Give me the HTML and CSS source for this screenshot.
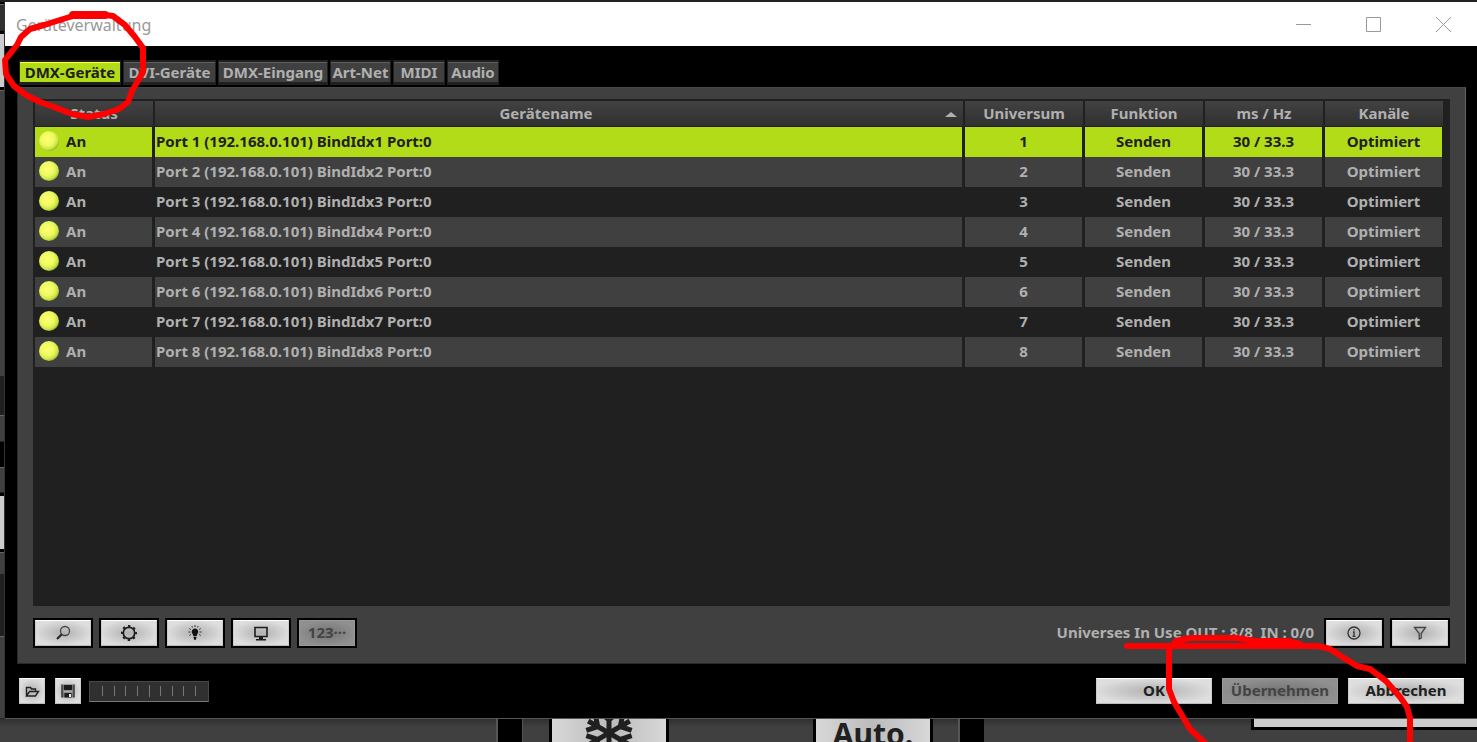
FILE: index.html
```html
<!DOCTYPE html>
<html lang="de">
<head>
<meta charset="utf-8">
<title>Geräteverwaltung</title>
<link rel="stylesheet" href="styles.css">
</head>
<body>
<div class="desktop">
  <div class="top-edge"></div>
  <div class="middle">
    <div class="left-edge">
      <i class="slab gap h2"></i><i class="slab grey dim h28"></i><i class="slab gap h4"></i><i class="slab light h52"></i><i class="slab gap h4"></i>
      <i class="slab grey grow"></i><i class="slab dark h38"></i><i class="slab grey h28"></i><i class="slab gap h24"></i>
      <i class="slab grey h26"></i><i class="slab gap h4"></i><i class="slab light h52"></i><i class="slab gap h4"></i>
      <i class="slab grey h23"></i><i class="slab dark h60"></i><i class="slab grey h82"></i>
    </div>
    <main class="window">
      <header class="titlebar">
        <h1 class="title">Geräteverwaltung</h1>
        <div class="window-controls">
          <button class="wc" aria-label="Minimieren"><svg width="17" height="17" viewBox="0 0 17 17"><path d="M1 8.500h15"/></svg></button>
          <button class="wc" aria-label="Maximieren"><svg width="17" height="17" viewBox="0 0 17 17"><path d="M1.500 1.500h14v14h-14z"/></svg></button>
          <button class="wc" aria-label="Schließen"><svg width="17" height="17" viewBox="0 0 17 17"><path d="M1 1l15 15M16 1L1 16"/></svg></button>
        </div>
      </header>
      <div class="content">
        <nav class="tabs" role="tablist">
          <button class="tab w102 active" role="tab" aria-selected="true">DMX-Geräte</button>
          <button class="tab w93" role="tab">DVI-Geräte</button>
          <button class="tab w110" role="tab">DMX-Eingang</button>
          <button class="tab w61" role="tab">Art-Net</button>
          <button class="tab w52" role="tab">MIDI</button>
          <button class="tab w52" role="tab">Audio</button>
        </nav>
        <section class="panel">
          <div class="list">
            <table class="devices">
              <colgroup><col class="c-fix"><col><col class="c-fix"><col class="c-fix"><col class="c-fix"><col class="c-fix"></colgroup>
              <thead><tr><th>Status</th><th class="name-head">Gerätename<span class="sort"></span></th><th>Universum</th><th>Funktion</th><th>ms / Hz</th><th>Kanäle</th></tr></thead>
              <tbody>
                <tr class="selected"><td class="st"><span class="led"></span>An</td><td class="nm">Port 1 (192.168.0.101) BindIdx1 Port:0</td><td>1</td><td>Senden</td><td>30 / 33.3</td><td>Optimiert</td></tr>
                <tr><td class="st"><span class="led"></span>An</td><td class="nm">Port 2 (192.168.0.101) BindIdx2 Port:0</td><td>2</td><td>Senden</td><td>30 / 33.3</td><td>Optimiert</td></tr>
                <tr><td class="st"><span class="led"></span>An</td><td class="nm">Port 3 (192.168.0.101) BindIdx3 Port:0</td><td>3</td><td>Senden</td><td>30 / 33.3</td><td>Optimiert</td></tr>
                <tr><td class="st"><span class="led"></span>An</td><td class="nm">Port 4 (192.168.0.101) BindIdx4 Port:0</td><td>4</td><td>Senden</td><td>30 / 33.3</td><td>Optimiert</td></tr>
                <tr><td class="st"><span class="led"></span>An</td><td class="nm">Port 5 (192.168.0.101) BindIdx5 Port:0</td><td>5</td><td>Senden</td><td>30 / 33.3</td><td>Optimiert</td></tr>
                <tr><td class="st"><span class="led"></span>An</td><td class="nm">Port 6 (192.168.0.101) BindIdx6 Port:0</td><td>6</td><td>Senden</td><td>30 / 33.3</td><td>Optimiert</td></tr>
                <tr><td class="st"><span class="led"></span>An</td><td class="nm">Port 7 (192.168.0.101) BindIdx7 Port:0</td><td>7</td><td>Senden</td><td>30 / 33.3</td><td>Optimiert</td></tr>
                <tr><td class="st"><span class="led"></span>An</td><td class="nm">Port 8 (192.168.0.101) BindIdx8 Port:0</td><td>8</td><td>Senden</td><td>30 / 33.3</td><td>Optimiert</td></tr>
              </tbody>
            </table>
          </div>
          <div class="toolbar">
            <button class="btn tool" aria-label="Suchen"><svg width="20" height="20" viewBox="0 0 20 20"><circle cx="12" cy="8" r="4.500" fill="none" stroke="#444" stroke-width="1.300"/><path d="M8.800 11.200L4 16" stroke="#222" stroke-width="2"/></svg></button>
            <button class="btn tool" aria-label="Einstellungen"><svg width="20" height="20" viewBox="0 0 20 20"><circle cx="10" cy="10" r="5.700" fill="none" stroke="#1c1c1c" stroke-width="1.700"/><circle cx="10" cy="10" r="7" fill="none" stroke="#1c1c1c" stroke-width="2" stroke-dasharray="2.300 3.198" stroke-dashoffset="1.150"/></svg></button>
            <button class="btn tool" aria-label="Identifizieren"><svg width="20" height="20" viewBox="0 0 20 20"><path d="M10 5.500a3.200 3.200 0 0 0-2.700 5c.7 1 .9 1.500.9 2.500h3.600c0-1 .2-1.500.9-2.500a3.200 3.200 0 0 0-2.700-5z" fill="#111"/><path d="M8.500 14.500h3M9 16h2" stroke="#111" stroke-width="1.300"/><path d="M10 2v2M6.800 3l.8 1.500M13.200 3l-.8 1.500M4.300 5.500l1.500 1M15.700 5.500l-1.500 1M3.500 9h2M16.500 9h-2M4.300 12.500l1.500-1M15.700 12.500l-1.500-1" stroke="#333" stroke-width="1"/></svg></button>
            <button class="btn tool" aria-label="Anzeige"><svg width="20" height="20" viewBox="0 0 20 20"><path d="M4 4.500h12v9H4z" fill="none" stroke="#1c1c1c" stroke-width="1.600"/><path d="M8 14h4v2h-4zM5 16h10v1.500H5z" fill="#1c1c1c"/></svg></button>
            <button class="btn tool text" disabled>123···</button>
            <span class="usage">Universes In Use OUT : 8/8&nbsp; IN : 0/0</span>
            <button class="btn tool" aria-label="Info"><svg width="20" height="20" viewBox="0 0 20 20"><circle cx="10" cy="10" r="6" fill="none" stroke="#333" stroke-width="1.300"/><path d="M10 6v1.500M9 9h1v4M8.500 13.300h3" fill="none" stroke="#333" stroke-width="1.300"/></svg></button>
            <button class="btn tool" aria-label="Filter"><svg width="20" height="20" viewBox="0 0 20 20"><path d="M4.500 4.500h11l-4.300 6v4.500l-2 1V10.500z" fill="none" stroke="#444" stroke-width="1.300"/></svg></button>
          </div>
        </section>
        <footer class="footer">
          <button class="btn square" aria-label="Öffnen"><svg width="16" height="16" viewBox="0 0 16 16"><path d="M2.500 13V4.500h4l1 1.500h4v2.500M2.500 13h9l3-4.500h-9z" fill="none" stroke="#222" stroke-width="1.400"/></svg></button>
          <button class="btn square" aria-label="Speichern"><svg width="16" height="16" viewBox="0 0 16 16"><path d="M1.500 1.500h13v13h-13z" fill="#777"/><path d="M1.500 1.500h1v13h-1zM13.500 1.500h1v13h-1zM4 2h8v5H4z" fill="#1c1c1c"/><path d="M3.500 7.500h9v2h-9z" fill="#aaa"/><path d="M4.500 10h7v4.500h-7z" fill="#1c1c1c"/><path d="M9 11h2v3H9z" fill="#eee"/></svg></button>
          <div class="meter"><i></i><i></i><i></i><i></i><i class="mid"></i><i></i><i></i><i></i><i></i></div>
          <div class="actions">
            <button class="btn action text">OK</button>
            <button class="btn action text" disabled>Übernehmen</button>
            <button class="btn action text">Abbrechen</button>
          </div>
        </footer>
      </div>
    </main>
  </div>
  <div class="bottom-edge">
    <div class="pane first"></div>
    <div class="pane keys">
      <button class="key" aria-label="Einfrieren"><svg class="flake" width="50" height="50" viewBox="-25 -25 50 50"><g id="arm"><path d="M0-24V24M-9-21L0-13L9-21M-9 21L0 13L9 21"/></g><use href="#arm" transform="rotate(60)"/><use href="#arm" transform="rotate(120)"/></svg></button>
      <button class="key">Auto.</button>
    </div>
    <div class="pane last"><div class="key-edge"></div></div>
  </div>
  <svg class="marks" viewBox="0 0 1477 742" aria-hidden="true">
    <path class="thick" d="M73 15H105"/>
    <path d="M105 15L113 16L125 25L135 37L143 48V72L132 91L128 102L119 109L104 114L88 117L72 114L54 107L40 102L26 95L14 86L6 74L5 60L17 45L21 37L30 29L44 25L60 20L73 16"/>
    <path d="M1127 646H1318L1330 649L1344 658L1357 666L1370 669L1386 681L1400 697L1407 707L1410 718V742M1300 644L1288 641L1256 641L1236 638H1190L1176 641L1169 650V689L1174 702L1190 729L1205 743"/>
  </svg>
</div>
</body>
</html>
```
FILE: styles.css
```css
* { box-sizing: border-box; }
body { margin: 0; background: #000; color: #b0b0b0; font: bold 15px/20px "Noto Sans", sans-serif; }
button { font: inherit; color: inherit; margin: 0; padding: 0; border: 0; }
.desktop { position: relative; display: flex; flex-direction: column; min-height: 100vh; overflow: hidden; }
.top-edge { height: 2px; background: #222; }
.middle { flex: 1; display: flex; }
.left-edge { width: 5px; display: flex; flex-direction: column; border-right: 1px solid #333; }
.slab { display: block; }
.grow { flex: 1; }
.h2 { height: 2px; }
.h4 { height: 3px; }
.h23 { height: 23px; }
.h24 { height: 25px; }
.h26 { height: 26px; }
.h28 { height: 27px; }
.h38 { height: 38px; }
.h52 { height: 53px; }
.h60 { height: 61px; }
.h82 { height: 83px; }
.grey { background: #404040; border-top: 1px solid #666; border-bottom: 1px solid #222; }
.dim { background: #303030; }
.dark { background: #202020; }
.light { background: #ccc; }
.gap { background: #000; }
.window { flex: 1; display: flex; flex-direction: column; background: #000; border-bottom: 1px solid #555; }
.titlebar { height: 44px; background: #fff; display: flex; align-items: center; justify-content: space-between; padding: 0 25px 0 11px; }
.title { margin: 0; padding-top: 2px; color: #999; font: 16px/24px "Noto Sans", sans-serif; }
.window-controls { display: flex; gap: 53px; }
.wc { background: none; display: flex; }
.wc svg { fill: none; stroke: #999; stroke-width: 1; }
.content { flex: 1; display: flex; flex-direction: column; padding: 14px 11px 14px 12px; }
.tabs { display: flex; gap: 2px; padding-left: 2px; margin-bottom: 2px; }
.tab { height: 25px; background: #404040; border: 1px solid #202020; border-bottom-width: 3px; border-top-width: 2px; box-shadow: inset 0 1px #606060; line-height: 20px; }
.tab.active { background: #b2dc18; color: #202020; box-shadow: inset 0 1px #ff4; }
.w102 { width: 102px; }
.w93 { width: 93px; }
.w110 { width: 110px; }
.w61 { width: 61px; }
.w52 { width: 52px; }
.panel { flex: 1; display: flex; flex-direction: column; background: #404040; border: 1px solid #2a2a2a; border-top-color: #484848; border-right-color: #666; padding: 11px 15px 15px; }
.list { flex: 1; background: #202020; padding: 2px 5px 0 2px; }
.devices { width: 100%; table-layout: fixed; border-collapse: separate; border-spacing: 0; }
.c-fix { width: 120px; }
.devices th { height: 26px; padding: 0; line-height: 24px; padding-bottom: 1px; background: linear-gradient(#424242, #303030); border-right: 2px solid #202020; border-bottom: 1px solid #202020; font-weight: bold; }
.devices .name-head { position: relative; padding-right: 26px; }
.sort { position: absolute; right: 6px; top: 11px; border: 6px solid transparent; border-top: 0; border-bottom: 5px solid #b0b0b0; }
.devices td { height: 30px; padding: 0 0 2px; text-align: center; border-right: 3px solid #202020; line-height: 20px; }
.devices tr:nth-child(even) td { background: #404040; }
.devices .selected td { background: #b2dc18; color: #202020; }
.devices .st { text-align: left; padding-left: 4px; }
.devices .nm { text-align: left; padding-left: 1px; }
.led { display: inline-block; width: 20px; height: 20px; margin-right: 7px; vertical-align: top; border-radius: 50%; background: radial-gradient(circle at 42% 40%, #ffff70, #eefa62 40%, #c8e444 62%, #6d7c1c 84%); }
.toolbar { display: flex; gap: 6px; align-items: center; margin-top: 12px; }
.btn { display: flex; align-items: center; justify-content: center; color: #202020; background: radial-gradient(ellipse at center, #b0b0b0, #dedede 75%); border: 1px solid #ccc; border-top-color: #fff; border-bottom-color: #bbb; }
.btn:disabled { color: #444; background: radial-gradient(ellipse at center, #747474, #909090 75%); border-color: #999; }
.tool { width: 60px; height: 30px; outline: 2px solid #000; outline-offset: -2px; border-width: 3px; }
.text { padding-bottom: 2px; }
.usage { margin-left: auto; margin-right: 4px; padding-bottom: 2px; }
.footer { display: flex; align-items: center; padding: 14px 2px 0 2px; }
.square { width: 26px; height: 26px; margin-right: 10px; }
.meter { width: 120px; height: 21px; margin-left: -2px; background: #303030; border: 1px solid #484848; border-bottom-color: #777; display: flex; align-items: center; justify-content: space-between; padding: 0 12px; }
.meter i { width: 1px; height: 10px; background: #777; }
.meter .mid { height: 12px; }
.actions { display: flex; gap: 10px; margin-left: auto; }
.action { width: 116px; height: 26px; }
.bottom-edge { height: 23px; display: flex; gap: 24px; overflow: hidden; }
.pane { height: 23px; background: linear-gradient(#303030, #404040 8px); border-right: 2px solid #555; }
.first { width: 498px; }
.keys { width: 438px; display: flex; justify-content: space-between; padding: 0 25px 0 26px; border-left: 1px solid #555; }
.key { width: 120px; height: 64px; border: 3px solid #000; border-width: 0 3px; background: linear-gradient(90deg, #d8d8d8, #bbb 50%, #d8d8d8); color: #202020; font-size: 30px; line-height: 30px; display: flex; justify-content: center; align-items: flex-start; }
.flake { margin-top: -11px; fill: none; stroke: #202020; stroke-width: 5; }
.last { flex: 1; display: flex; justify-content: flex-end; border-right: 0; }
.key-edge { width: 226px; height: 11px; background: #ccc; border: 3px solid #000; border-width: 0 0 3px 3px; }
.marks { position: absolute; left: 0; top: 0; width: 100%; height: 100%; pointer-events: none; fill: none; stroke: #f00; stroke-width: 6; stroke-linecap: round; stroke-linejoin: round; }
.marks .thick { stroke-width: 8; }
```
